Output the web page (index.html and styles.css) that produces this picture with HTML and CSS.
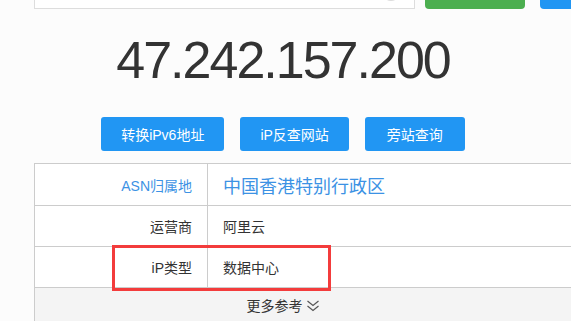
FILE: index.html
```html
<!DOCTYPE html>
<html lang="zh">
<head>
<meta charset="utf-8">
<link rel="stylesheet" href="styles.css">
</head>
<body>
<div class="page">
  <div class="topbar">
    <div class="search"><span class="clear"></span></div>
    <div class="btn-green"></div>
    <div class="btn-blue"></div>
  </div>
  <div class="center">
    <div class="ip">47.242.157.200</div>
    <div class="actions">
      <a class="act">转换iPv6地址</a>
      <a class="act">iP反查网站</a>
      <a class="act">旁站查询</a>
    </div>
  </div>
  <div class="table">
    <div class="row r1">
      <div class="k blue">ASN归属地</div>
      <div class="v big blue">中国香港特别行政区</div>
    </div>
    <div class="row">
      <div class="k">运营商</div>
      <div class="v">阿里云</div>
    </div>
    <div class="row">
      <div class="k">iP类型</div>
      <div class="v">数据中心</div>
    </div>
    <div class="more">
      <div class="more-inner">更多参考
        <svg class="chev" width="14" height="12" viewBox="0 0 14 12"><polyline points="1.5,1 7,5.5 12.5,1" fill="none" stroke="#555" stroke-width="1.2"/><polyline points="1.5,6 7,10.5 12.5,6" fill="none" stroke="#555" stroke-width="1.2"/></svg>
      </div>
    </div>
    <div class="mark"></div>
  </div>
</div>
</body>
</html>
```
FILE: styles.css
```css
html, body { margin: 0; padding: 0; }
body {
  background: #fcfcfc;
  font-family: "Liberation Sans", "Noto Sans CJK SC", sans-serif;
  color: #333;
  overflow: hidden;
  width: 571px;
  height: 321px;
}
.page { padding-left: 34px; }
.topbar {
  display: flex;
  align-items: flex-end;
  margin-top: -31px;
  height: 40px;
  width: 700px;
}
.search {
  position: relative;
  flex: 0 0 auto;
  width: 381px;
  height: 40px;
  background: #fff;
  border: 1px solid #ddd;
  box-sizing: border-box;
}
.clear {
  position: absolute;
  right: 14px;
  bottom: 7px;
  width: 18px;
  height: 18px;
  border-radius: 50%;
  background: #ddd;
}
.btn-green {
  flex: 0 0 auto;
  margin-left: 10px;
  width: 100px;
  height: 40px;
  background: #4caf50;
  border-radius: 4px;
}
.btn-blue {
  flex: 0 0 auto;
  margin-left: 15px;
  width: 100px;
  height: 40px;
  background: #2196f3;
  border-radius: 4px;
}
.center {
  width: 498px;
  display: flex;
  flex-direction: column;
  align-items: center;
}
.ip {
  margin-top: 21px;
  font-family: "Liberation Sans", sans-serif;
  font-size: 52px;
  line-height: 60px;
  letter-spacing: -2px;
  color: #333;
}
.actions {
  margin-top: 27px;
  display: flex;
  gap: 16px;
}
.act {
  display: flex;
  align-items: center;
  height: 34px;
  padding: 0 20px;
  background: #2196f3;
  color: #fff;
  font-size: 14px;
  border-radius: 3px;
}
.act:nth-child(3) { padding: 0 22px; }
.table {
  position: relative;
  margin-top: 12px;
  width: 580px;
  background: #fff;
  border-top: 1px solid #ccc;
  border-left: 1px solid #ccc;
}
.row {
  display: flex;
  height: 40px;
  border-bottom: 1px solid #ccc;
}
.row.r1 { height: 41px; }
.k {
  width: 157px;
  padding-right: 15px;
  border-right: 1px solid #ccc;
  display: flex;
  align-items: center;
  justify-content: flex-end;
  font-size: 14px;
}
.v {
  padding-left: 15px;
  display: flex;
  align-items: center;
  font-size: 14px;
}
.v.big { font-size: 18px; }
.blue { color: #3c92e4; }
.more {
  height: 40px;
  background: #f4f4f4;
}
.more-inner {
  width: 496px;
  height: 34px;
  display: flex;
  align-items: center;
  justify-content: center;
  gap: 3px;
  font-size: 14px;
  color: #333;
}
.chev { margin-top: 1px; }
.mark {
  position: absolute;
  left: 77px;
  top: 81px;
  width: 219px;
  height: 46px;
  border: 3px solid #f33c3c;
  box-sizing: border-box;
}
```
